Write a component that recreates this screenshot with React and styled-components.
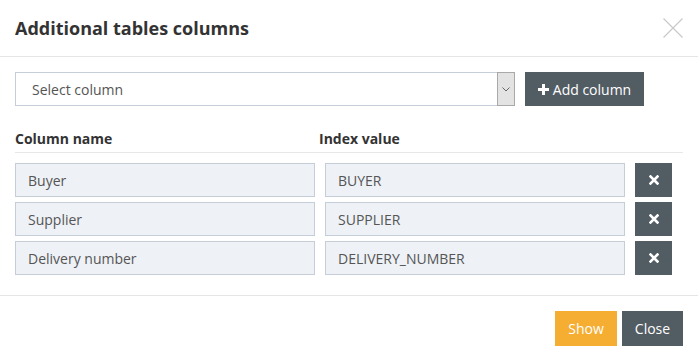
import React from "react";
import styled, { createGlobalStyle } from "styled-components";

const Global = createGlobalStyle`
  html, body { margin: 0; padding: 0; background: #fff; }
  body { font-family: "Open Sans", "Liberation Sans", sans-serif; color: #333; }
  * { box-sizing: border-box; }
`;

const Modal = styled.div`
  width: 698px;
  height: 361px;
  background: #fff;
  display: flex;
  flex-direction: column;
`;

const Header = styled.div`
  height: 57px;
  border-bottom: 1px solid #e5e5e5;
  display: flex;
  align-items: center;
  justify-content: space-between;
  padding: 0 15px;
`;

const Title = styled.h4`
  margin: 0;
  font-size: 18px;
  font-weight: 700;
  color: #333;
`;

const CloseX = styled.button`
  border: 0;
  background: none;
  padding: 0;
  width: 20px;
  height: 20px;
  margin-top: -1px;
  display: flex;
`;

const Body = styled.div`
  padding: 15px 15px 0 15px;
  height: 239px;
  border-bottom: 1px solid #e5e5e5;
`;

const AddRow = styled.div`
  display: flex;
  gap: 10px;
  align-items: center;
`;

const SelectBox = styled.div`
  width: 500px;
  height: 34px;
  border: 1px solid #c5cdd9;
  display: flex;
  align-items: center;
  justify-content: space-between;
  font-size: 14px;
  color: #555;
  padding-left: 16px;
`;

const Arrow = styled.div`
  width: 18px;
  height: 34px;
  margin: -1px -1px -1px 0;
  border: 1px solid #a9a9a9;
  background: #e3e3e3;
  display: flex;
  align-items: center;
  justify-content: center;
`;

const DarkButton = styled.button`
  border: 0;
  background: #525c63;
  color: #fff;
  font-family: inherit;
  font-size: 14px;
  height: ${(p) => p.$h || 34}px;
  width: ${(p) => p.$w}px;
  padding: 0;
  display: flex;
  align-items: center;
  justify-content: center;
  gap: 4px;
`;

const ColHeads = styled.div`
  display: flex;
  margin-top: 23px;
  padding-bottom: 4px;
  border-bottom: 1px solid #e8e8e8;
  width: 668px;
  font-size: 14px;
  font-weight: 700;
  color: #333;
`;

const ColHead = styled.div`
  width: ${(p) => p.$w}px;
`;

const Rows = styled.div`
  display: flex;
  flex-direction: column;
  gap: 5px;
  margin-top: 10px;
`;

const Row = styled.div`
  display: flex;
  gap: 10px;
`;

const Field = styled.div`
  width: 300px;
  height: 34px;
  background: #eef1f6;
  border: 1px solid #c5cdd9;
  font-size: 14px;
  color: #555;
  padding-left: 12px;
  display: flex;
  align-items: center;
`;

const Footer = styled.div`
  display: flex;
  justify-content: flex-end;
  gap: 5px;
  padding: 15px 15px 0 0;
`;

const FootButton = styled.button`
  border: 0;
  height: 35px;
  width: ${(p) => p.$w}px;
  background: ${(p) => p.$bg};
  color: #fff;
  font-family: inherit;
  font-size: 14px;
  padding: 0;
`;

const rows = [
  ["Buyer", "BUYER"],
  ["Supplier", "SUPPLIER"],
  ["Delivery number", "DELIVERY_NUMBER"],
];

export default function App() {
  return (
    <>
      <Global />
      <Modal>
        <Header>
          <Title>Additional tables columns</Title>
          <CloseX aria-label="close">
            <svg width="20" height="20" viewBox="0 0 20 20">
              <path d="M0.5 0.5 L19.5 19.5 M19.5 0.5 L0.5 19.5" stroke="#c8c8c8" strokeWidth="1.1" />
            </svg>
          </CloseX>
        </Header>
        <Body>
          <AddRow>
            <SelectBox>
              <span>Select column</span>
              <Arrow>
                <svg width="8" height="5" viewBox="0 0 8 5">
                  <path d="M0.5 0.5 L4 4 L7.5 0.5" stroke="#666" strokeWidth="1" fill="none" />
                </svg>
              </Arrow>
            </SelectBox>
            <DarkButton $w={119}>
              <svg width="11" height="11" viewBox="0 0 11 11">
                <path d="M4 0h3v4h4v3H7v4H4V7H0V4h4z" fill="#fff" />
              </svg>
              Add column
            </DarkButton>
          </AddRow>
          <ColHeads>
            <ColHead $w={304}>Column name</ColHead>
            <ColHead $w={300}>Index value</ColHead>
          </ColHeads>
          <Rows>
            {rows.map(([a, b]) => (
              <Row key={a}>
                <Field>{a}</Field>
                <Field>{b}</Field>
                <DarkButton $w={37}>
                  <svg width="10" height="10" viewBox="0 0 10 10">
                    <path d="M1.5 1.5 L8.5 8.5 M8.5 1.5 L1.5 8.5" stroke="#fff" strokeWidth="2.6" strokeLinecap="square" />
                  </svg>
                </DarkButton>
              </Row>
            ))}
          </Rows>
        </Body>
        <Footer>
          <FootButton $w={62} $bg="#f5ad32">Show</FootButton>
          <FootButton $w={61} $bg="#525c63">Close</FootButton>
        </Footer>
      </Modal>
    </>
  );
}
